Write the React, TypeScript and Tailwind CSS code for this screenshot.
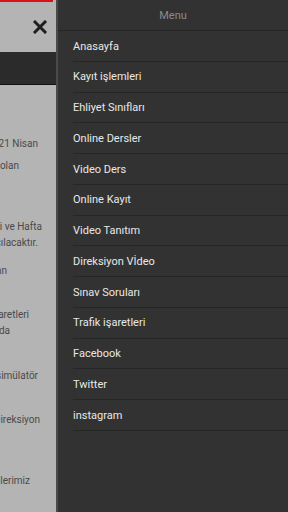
const menu = [
  "Anasayfa",
  "Kayıt işlemleri",
  "Ehliyet Sınıfları",
  "Online Dersler",
  "Video Ders",
  "Online Kayıt",
  "Video Tanıtım",
  "Direksiyon Vİdeo",
  "Sınav Soruları",
  "Trafik işaretleri",
  "Facebook",
  "Twitter",
  "instagram",
];

// lines of the page behind the drawer; only their tail is visible
const lines = [
  { text: "Ehliyet sınavları 21 Nisan", right: "mr-[18px]", top: "mt-[51px]" },
  { text: "tarihinde yapılacak olan", right: "mr-[37px]", top: "mt-[6px]" },
  { text: "Hafta içi ve Hafta", right: "mr-[14px]", top: "mt-[45px]" },
  { text: "sonu kurslarımız açılacaktır.", right: "mr-[18px]", top: "mt-0" },
  { text: "Kayıtlarımız başlamıştan", right: "mr-[49px]", top: "mt-[12px]" },
  { text: "Trafik işaretleri", right: "mr-[27px]", top: "mt-[28px]" },
  { text: "hakkında", right: "mr-[46px]", top: "mt-0" },
  { text: "Direksiyon simülatör", right: "mr-[18px]", top: "mt-[29px]" },
  { text: "Direksiyon", right: "mr-[16px]", top: "mt-[28px]" },
  { text: "Eğitmenlerimiz", right: "mr-[26px]", top: "mt-[45px]" },
];

export default function App() {
  return (
    <div className="flex w-[288px] h-[512px] overflow-hidden bg-[#b4b4b4] font-['Roboto',sans-serif]">
      <div className="w-[56px] shrink-0 flex flex-col overflow-hidden">
        <div className="h-[2px] w-[53px] bg-[#d4141a]" />
        <div className="h-[50px] flex items-center justify-end pr-[9px]">
          <svg width="14" height="14" viewBox="0 0 14 14">
            <path d="M2 2 L12 12 M12 2 L2 12" stroke="#1e1e1e" strokeWidth="3" strokeLinecap="square" />
          </svg>
        </div>
        <div className="h-[33px] bg-[#2b2b2b] border-b border-[#111]" />
        <div className="flex flex-col items-end text-[10px] leading-[16px] text-[#4a4a4a]">
          {lines.map((l, i) => (
            <div key={i} className={`whitespace-nowrap ${l.right} ${l.top}`}>
              {l.text}
            </div>
          ))}
        </div>
      </div>
      <div className="w-[2px] shrink-0 bg-[#4a4a4a]" />
      <div className="flex-1 bg-[#323232] flex flex-col">
        <div className="h-[31px] pt-[2px] flex items-center justify-center border-b border-[#262626] text-[11px] text-[#8a8a8a]">
          Menu
        </div>
        {menu.map((m) => (
          <div
            key={m}
            className="ml-[15px] h-[30.75px] pt-[2px] flex items-center border-b border-[#262626] text-[11px] text-[#e8e8e8]"
          >
            {m}
          </div>
        ))}
      </div>
    </div>
  );
}
